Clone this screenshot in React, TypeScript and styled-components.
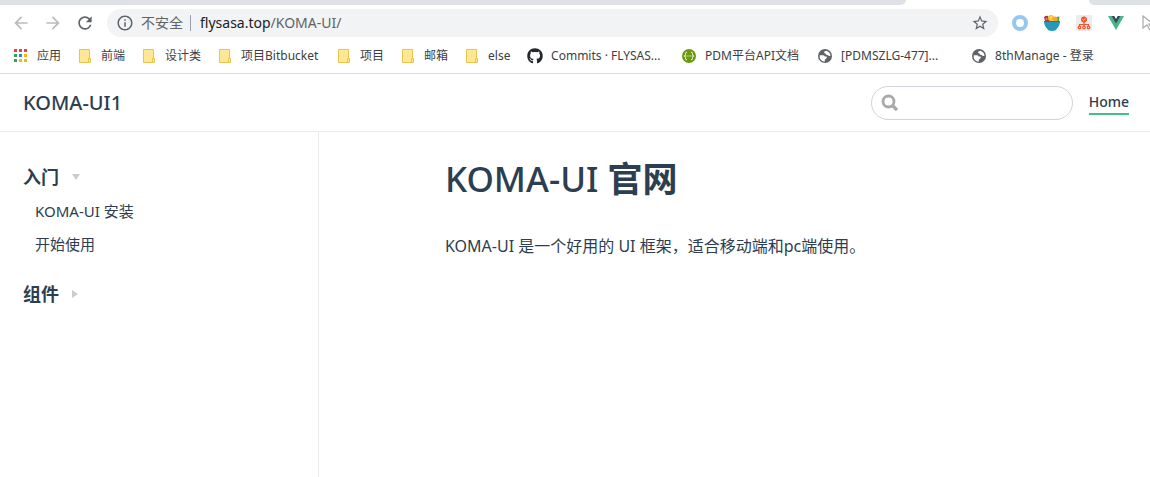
import React from 'react';
import styled, { createGlobalStyle } from 'styled-components';
import { MdArrowBack, MdArrowForward, MdInfoOutline, MdRefresh, MdStarBorder } from 'react-icons/md';
import { FaGithub } from 'react-icons/fa';

const uiFont = `"Noto Sans", "Noto Sans CJK SC", sans-serif`;
const slateText = '#2c3e50';
const rule = '#eaecef';

const GlobalStyle = createGlobalStyle`
  * { box-sizing: border-box; }
  html, body, #root { min-height: 100vh; }
  body { margin: 0; background: #fff; font-family: ${uiFont}; color: ${slateText}; }
  button { border: 0; padding: 0; background: none; font: inherit; color: inherit; cursor: pointer; }
  a { color: inherit; text-decoration: none; }
  svg { display: block; flex: none; }
`;

const Window = styled.div`
  display: flex;
  flex-direction: column;
  min-height: 100vh;
  overflow: hidden;
`;

const TabStrip = styled.div`
  display: flex;
  justify-content: space-between;
  height: 5px;
`;

const InactiveTabs = styled.div<{ $side: 'left' | 'right' }>`
  flex: ${p => (p.$side === 'left' ? '1' : '0 0 61px')};
  margin-right: ${p => (p.$side === 'left' ? '183px' : '0')};
  background: #dee1e6;
  border-radius: ${p => (p.$side === 'left' ? '0 0 8px 0' : '0 0 0 8px')};
`;

const Toolbar = styled.div`
  display: flex;
  align-items: center;
  height: 36px;
  padding-left: 11px;
`;

const ToolButton = styled.button<{ $muted?: boolean }>`
  display: flex;
  flex: none;
  margin-right: 12px;
  color: ${p => (p.$muted ? '#babcbe' : '#5f6368')};
`;

const AddressBar = styled.div`
  display: flex;
  align-items: center;
  flex: 1;
  height: 28px;
  padding: 0 9px;
  border-radius: 14px;
  background: #f1f3f4;
  color: #5f6368;
  font-size: 14px;
  line-height: 20px;
`;

const Security = styled.button`
  display: flex;
  align-items: center;
  gap: 7px;
  padding-right: 7px;
`;

const Separator = styled.span`
  width: 1px;
  height: 16px;
  margin-right: 9px;
  background: #9aa0a6;
`;

const Host = styled.label`
  color: #202124;
`;

const PathInput = styled.input`
  flex: 1;
  min-width: 0;
  padding: 0;
  border: 0;
  outline: 0;
  background: none;
  color: #5f6368;
  font: inherit;
`;

const Extensions = styled.div`
  display: flex;
  align-items: center;
  gap: 16px;
  width: 152px;
  padding-left: 14px;
  overflow: hidden;
`;

const ExtensionButton = styled.button`
  flex: none;
`;

const BookmarkBar = styled.nav`
  display: flex;
  gap: 16px;
  height: 33px;
  padding: 5px 13px;
  border-bottom: 1px solid #dadce0;
`;

const BookmarkLink = styled.a`
  display: flex;
  align-items: center;
  flex: none;
  gap: 8px;
  height: 20px;
  color: #3c4043;
  font-size: 12px;
  line-height: 20px;
  white-space: nowrap;
`;

const BookmarkLabel = styled.span<{ $width?: number }>`
  width: ${p => (p.$width ? `${p.$width}px` : 'auto')};
`;

const SiteHeader = styled.header`
  display: flex;
  align-items: center;
  height: 58px;
  padding: 0 21px 0 23px;
  border-bottom: 1px solid ${rule};
`;

const SiteName = styled.a`
  flex: 1;
  font-size: 20px;
  font-weight: 500;
  line-height: 28px;
`;

const SearchBox = styled.label`
  display: flex;
  align-items: center;
  gap: 8px;
  width: 202px;
  height: 34px;
  margin-right: 16px;
  padding: 0 8px;
  border: 1px solid #cfd4db;
  border-radius: 17px;
`;

const SearchInput = styled.input`
  flex: 1;
  min-width: 0;
  border: 0;
  outline: 0;
  background: none;
  color: #4e6e8e;
  font: 14px/20px ${uiFont};
`;

const NavLink = styled.a`
  border-bottom: 2px solid #46bd87;
  font-size: 14px;
  font-weight: 500;
  line-height: 22px;
`;

const Body = styled.div`
  display: flex;
  flex: 1;
`;

const Sidebar = styled.aside`
  flex: none;
  width: 319px;
  padding: 31px 23px;
  border-right: 1px solid ${rule};
`;

const Group = styled.section`
  margin-bottom: 19px;
`;

const GroupToggle = styled.button`
  display: flex;
  align-items: center;
  gap: 13px;
  height: 28px;
  font-size: 18px;
  font-weight: 700;
  line-height: 28px;
`;

const Arrow = styled.span<{ $open: boolean }>`
  border: solid transparent;
  ${p =>
    p.$open
      ? 'border-width: 6px 4px 0; border-top-color: #ccc;'
      : 'border-width: 4px 0 4px 6px; border-left-color: #ccc;'}
`;

const PageList = styled.ul`
  margin: 4px 0 0;
  padding: 0 0 0 12px;
  list-style: none;
`;

const PageLink = styled.a`
  display: block;
  padding: 6px 0;
  font-size: 15px;
  line-height: 21px;
`;

const Main = styled.main`
  flex: 1;
  padding: 23px 24px;
`;

const Article = styled.article`
  max-width: 579px;
  margin: 0 auto;
`;

const Title = styled.h1`
  margin: 0;
  font-size: 35px;
  font-weight: 700;
  line-height: 48px;
`;

const ProductName = styled.span`
  font-weight: 500;
`;

const Paragraph = styled.p`
  margin: 29px 0 0;
  font-size: 16px;
  line-height: 28px;
`;

const AppsIcon = () => {
  const colors = ['#ea4335', '#ea4335', '#ea4335', '#34a05a', '#1e88e5', '#fbb40a', '#34a05a', '#fbb40a', '#fbb40a'];
  return (
    <svg width="16" height="16" aria-hidden="true">
      {colors.map((c, i) => (
        <rect key={i} x={1 + (i % 3) * 5} y={1 + Math.floor(i / 3) * 5} width="3" height="3" fill={c} />
      ))}
    </svg>
  );
};

const FolderIcon = () => (
  <svg width="16" height="16" aria-hidden="true">
    <path d="M2.5 1.5h10v13h-10z" fill="#ffe796" stroke="#e8c64d" />
    <path d="M11.5 10.5h2v4h-2z" fill="#ffe796" stroke="#e8c64d" />
  </svg>
);

const GlobeIcon = () => (
  <svg width="16" height="16" aria-hidden="true">
    <circle cx="8" cy="8" r="7" fill="#5f6368" />
    <path d="M2.700 7.300h3.300q1.400 0 1.700 1.300h2q.5 1.800-.8 2.200-1.400.2-1.200 2.900-3.900-.5-5-4z" fill="#fff" />
    <path d="M9.500 2.700q-2.400.3-2.400 1.500 0 1.200 1.400 1.200.2 1.700 2 1.700.9 1.200 3 .6-.1-3.500-4-5z" fill="#fff" />
  </svg>
);

const SwaggerIcon = () => (
  <svg width="16" height="16" aria-hidden="true">
    <circle cx="8" cy="8" r="7" fill="#6a9a0c" />
    <path d="M6 4.200q-1.500 0-1.500 1.300v1q0 1.500-1.300 1.500 1.300 0 1.300 1.500v1q0 1.300 1.500 1.300M10 4.200q1.500 0 1.500 1.300v1q0 1.500 1.300 1.500-1.300 0-1.300 1.500v1q0 1.300-1.500 1.300" fill="none" stroke="#fff" />
    <path d="M5.700 8h1M7.500 8h1M9.300 8h1" stroke="#fff" />
  </svg>
);

const RingIcon = () => (
  <svg width="16" height="16" aria-hidden="true">
    <circle cx="8" cy="8" r="6" fill="none" stroke="#94c8ee" strokeWidth="4" />
  </svg>
);

const BowlIcon = () => (
  <svg width="16" height="16" aria-hidden="true">
    <path d="M0 2q2-2 4-1l2 5H1z" fill="#b23a3c" />
    <circle cx="2.500" cy="4" r="1" fill="#ee8a72" />
    <path d="M12 2l3.500-.5L15 6h-4z" fill="#5c9c3c" />
    <circle cx="7" cy="3" r="3" fill="#f9bc2d" />
    <circle cx="11" cy="4" r="2.600" fill="#f4a928" />
    <circle cx="7" cy="2.500" r="1.400" fill="#ffd65a" />
    <path d="M0 6h16q0 5-3 7.500-1 2.500-5 2.500t-5-2.500Q0 11 0 6z" fill="#2799b8" />
    <path d="M0 6h16v1H0z" fill="#1b7c98" />
  </svg>
);

const SitemapIcon = () => (
  <svg width="16" height="16" aria-hidden="true">
    <rect width="16" height="16" rx="1" fill="#ececec" />
    <circle cx="8" cy="4.500" r="3" fill="#f1552f" />
    <path d="M6.600 4.400l1 1 1.800-2" fill="none" stroke="#fff" strokeWidth=".8" />
    <path d="M8 7v5M3.500 12V9.500h9V12" fill="none" stroke="#f1552f" strokeWidth="1.200" />
    <g fill="#ececec" stroke="#f1552f" strokeWidth="1.200">
      <circle cx="3.500" cy="12.500" r="1.300" />
      <circle cx="8" cy="12.500" r="1.300" />
      <circle cx="12.500" cy="12.500" r="1.300" />
    </g>
  </svg>
);

const VueIcon = () => (
  <svg width="16" height="16" aria-hidden="true">
    <path d="M0 1h3.400L8 9l4.600-8H16L8 15z" fill="#41b883" />
    <path d="M3.400 1H6.300L8 4l1.700-3h2.900L8 9z" fill="#35495e" />
  </svg>
);

const PointerIcon = () => (
  <svg width="16" height="16" aria-hidden="true">
    <path d="M3 1l10 8H9l3 5-2 1-3-5-4 3z" fill="#fff" stroke="#a9a9a9" strokeWidth="1.200" />
  </svg>
);

const SearchIcon = () => (
  <svg width="18" height="18" aria-hidden="true" fill="none" stroke="#aaa">
    <circle cx="8.500" cy="7.500" r="5.500" strokeWidth="2.800" />
    <path d="M12.500 11.500l4.500 4.500" strokeWidth="3.200" />
  </svg>
);

const bookmarks: { label: string; icon: React.ReactNode; width?: number }[] = [
  { label: '应用', icon: <AppsIcon /> },
  { label: '前端', icon: <FolderIcon /> },
  { label: '设计类', icon: <FolderIcon /> },
  { label: '项目Bitbucket', icon: <FolderIcon />, width: 79 },
  { label: '项目', icon: <FolderIcon /> },
  { label: '邮箱', icon: <FolderIcon /> },
  { label: 'else', icon: <FolderIcon />, width: 23 },
  { label: 'Commits · FLYSAS...', icon: <FaGithub size={16} color="#24292e" />, width: 114 },
  { label: 'PDM平台API文档', icon: <SwaggerIcon />, width: 96 },
  { label: '[PDMSZLG-477]...', icon: <GlobeIcon />, width: 114 },
  { label: '8thManage - 登录', icon: <GlobeIcon /> },
];

const extensions = [
  { name: 'Ring', icon: <RingIcon /> },
  { name: 'Bowl', icon: <BowlIcon /> },
  { name: 'Sitemap', icon: <SitemapIcon /> },
  { name: 'Vue', icon: <VueIcon /> },
  { name: 'Pointer', icon: <PointerIcon /> },
];

const groups = [
  { title: '入门', open: true, pages: ['KOMA-UI 安装', '开始使用'] },
  { title: '组件', open: false, pages: [] as string[] },
];

export default function App() {
  return (
    <Window>
      <GlobalStyle />
      <TabStrip>
        <InactiveTabs $side="left" />
        <InactiveTabs $side="right" />
      </TabStrip>
      <Toolbar>
        <ToolButton $muted aria-label="Back"><MdArrowBack size={20} /></ToolButton>
        <ToolButton $muted aria-label="Forward"><MdArrowForward size={20} /></ToolButton>
        <ToolButton aria-label="Reload"><MdRefresh size={20} /></ToolButton>
        <AddressBar>
          <Security><MdInfoOutline size={18} />不安全</Security>
          <Separator />
          <Host htmlFor="address">flysasa.top</Host>
          <PathInput id="address" defaultValue="/KOMA-UI/" />
          <button aria-label="Bookmark"><MdStarBorder size={18} /></button>
        </AddressBar>
        <Extensions>
          {extensions.map(e => (
            <ExtensionButton key={e.name} aria-label={e.name}>{e.icon}</ExtensionButton>
          ))}
        </Extensions>
      </Toolbar>
      <BookmarkBar>
        {bookmarks.map(b => (
          <BookmarkLink key={b.label} href="#">
            {b.icon}
            <BookmarkLabel $width={b.width}>{b.label}</BookmarkLabel>
          </BookmarkLink>
        ))}
      </BookmarkBar>
      <SiteHeader>
        <SiteName href="#">KOMA-UI1</SiteName>
        <SearchBox>
          <SearchIcon />
          <SearchInput type="text" aria-label="Search" />
        </SearchBox>
        <NavLink href="#">Home</NavLink>
      </SiteHeader>
      <Body>
        <Sidebar>
          {groups.map(g => (
            <Group key={g.title}>
              <GroupToggle aria-expanded={g.open}>
                {g.title}
                <Arrow $open={g.open} />
              </GroupToggle>
              {g.open && (
                <PageList>
                  {g.pages.map(p => (
                    <li key={p}><PageLink href="#">{p}</PageLink></li>
                  ))}
                </PageList>
              )}
            </Group>
          ))}
        </Sidebar>
        <Main>
          <Article>
            <Title><ProductName>KOMA-UI</ProductName> 官网</Title>
            <Paragraph>KOMA-UI 是一个好用的 UI 框架，适合移动端和pc端使用。</Paragraph>
          </Article>
        </Main>
      </Body>
    </Window>
  );
}
